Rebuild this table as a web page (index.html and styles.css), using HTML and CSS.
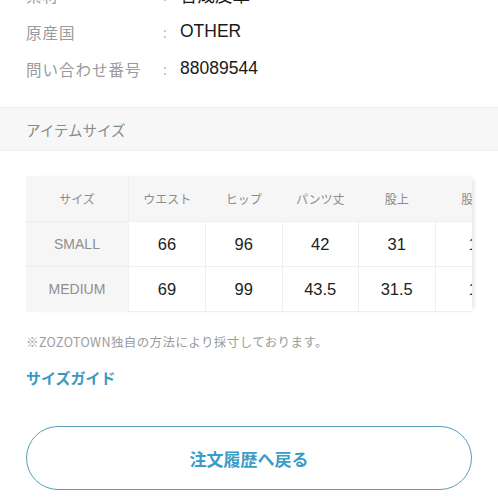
FILE: index.html
```html
<!DOCTYPE html>
<html lang="ja">
<head>
<meta charset="utf-8">
<link rel="stylesheet" href="styles.css">
</head>
<body>
<dl class="spec">
  <div class="spec-row"><dt>素材</dt><dd class="colon">:</dd><dd class="val">合成皮革</dd></div>
  <div class="spec-row"><dt>原産国</dt><dd class="colon">:</dd><dd class="val">OTHER</dd></div>
  <div class="spec-row"><dt>問い合わせ番号</dt><dd class="colon">:</dd><dd class="val">88089544</dd></div>
</dl>
<h2 class="section-head">アイテムサイズ</h2>
<div class="table-wrap">
  <table class="size-table">
    <thead>
      <tr><th class="first">サイズ</th><th>ウエスト</th><th>ヒップ</th><th>パンツ丈</th><th>股上</th><th>股下</th></tr>
    </thead>
    <tbody>
      <tr><th class="first">SMALL</th><td>66</td><td>96</td><td>42</td><td>31</td><td>1</td></tr>
      <tr><th class="first">MEDIUM</th><td>69</td><td>99</td><td>43.5</td><td>31.5</td><td>1</td></tr>
    </tbody>
  </table>
</div>
<p class="note">※ZOZOTOWN独自の方法により採寸しております。</p>
<a class="guide">サイズガイド</a>
<div class="btn-wrap"><a class="back-btn">注文履歴へ戻る</a></div>
</body>
</html>
```
FILE: styles.css
```css
html, body {
  margin: 0;
  padding: 0;
  background: #fff;
  font-family: "Noto Sans CJK JP", "Noto Sans", sans-serif;
  overflow: hidden;
  height: 498px;
}
.spec {
  margin: -24px 0 0 0;
  padding: 0 26px;
}
.spec-row {
  display: grid;
  grid-template-columns: 137px 17px 1fr;
  align-items: center;
  height: 37px;
}
.spec-row dt {
  font-size: 15.5px;
  color: #9a9a9a;
  letter-spacing: 1px;
}
.spec-row dd {
  margin: 0;
}
.colon {
  color: #bbb;
  font-size: 14px;
}
.val {
  font-family: "Liberation Sans", "Noto Sans CJK JP", sans-serif;
  font-size: 17.5px;
  color: #1a1a1a;
}
.section-head {
  margin: 20px 0 0 0;
  height: 42px;
  display: flex;
  align-items: center;
  padding-left: 26px;
  background: #f7f7f7;
  border-top: 1px solid #ececec;
  border-bottom: 1px solid #f0f0f0;
  font-size: 14.5px;
  font-weight: normal;
  color: #8a8a8a;
}
.table-wrap {
  margin: 25px 26px 0 26px;
  overflow: hidden;
  box-shadow: 4px 0 5px -3px rgba(0,0,0,0.15);
}
.size-table {
  border-collapse: collapse;
  table-layout: fixed;
  width: 486px;
}
.size-table th, .size-table td {
  text-align: center;
  padding: 0;
  width: 76.5px;
}
.size-table thead th {
  height: 45px;
  background: #f6f6f6;
  font-size: 12px;
  font-weight: normal;
  color: #8c8c8c;
}
.size-table thead th.first {
  border-right: 1px solid #efefef;
}
.size-table .first {
  width: 102px;
}
.size-table tbody th {
  background: #f6f6f6;
  font-family: "Liberation Sans", sans-serif;
  font-size: 14px;
  font-weight: normal;
  color: #8e8e8e;
  height: 44px;
  border-top: 1px solid #ececec;
}
.size-table tbody td {
  height: 44px;
  background: #fff;
  border: 1px solid #efefef;
  font-family: "Liberation Sans", sans-serif;
  font-size: 16.5px;
  color: #222;
}
.note {
  margin: 20px 26px 0 26px;
  font-size: 12.5px;
  letter-spacing: 0.4px;
  color: #9b9b9b;
}
.guide {
  display: block;
  margin: 16px 26px 0 26px;
  font-size: 15px;
  font-weight: bold;
  color: #3a98c4;
}
.btn-wrap {
  padding: 0 26px;
  margin-top: 38px;
}
.back-btn {
  display: flex;
  align-items: center;
  justify-content: center;
  height: 62px;
  border: 1.5px solid #5b9eb6;
  border-radius: 32px;
  font-size: 17px;
  font-weight: bold;
  color: #3b9cc6;
}
```
